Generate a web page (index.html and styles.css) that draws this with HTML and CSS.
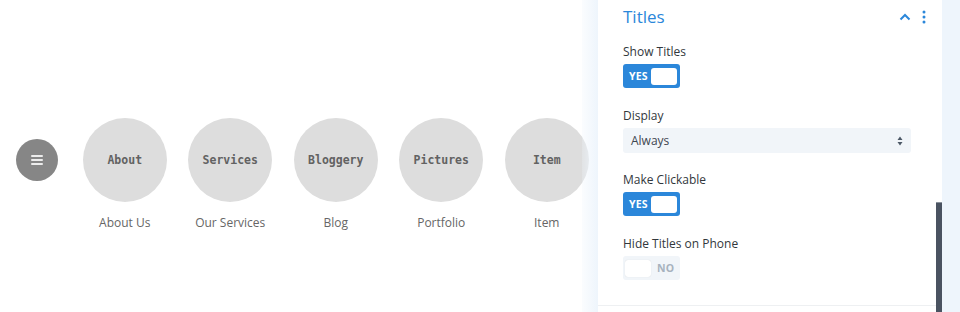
FILE: index.html
```html
<!DOCTYPE html>
<html>
<head>
<meta charset="utf-8">
<link rel="stylesheet" href="styles.css">
</head>
<body>
<div class="page">
  <div class="stage">
    <div class="menu-btn">
      <span class="bars"><i></i><i></i><i></i></span>
    </div>
    <div class="items">
      <div class="item"><div class="bubble">About</div><div class="caption">About Us</div></div>
      <div class="item"><div class="bubble">Services</div><div class="caption">Our Services</div></div>
      <div class="item"><div class="bubble">Bloggery</div><div class="caption">Blog</div></div>
      <div class="item"><div class="bubble">Pictures</div><div class="caption">Portfolio</div></div>
      <div class="item"><div class="bubble">Item</div><div class="caption">Item</div></div>
    </div>
  </div>
  <div class="side">
    <div class="panel">
      <div class="head">
        <span class="title">Titles</span>
        <span class="tools">
          <svg class="chev" width="12" height="8" viewBox="0 0 12 8"><path d="M1.5 6.5 L6 2 L10.5 6.5" fill="none" stroke="#2b87da" stroke-width="2"/></svg>
          <svg class="kebab" width="4" height="14" viewBox="0 0 4 14"><circle cx="2" cy="2" r="1.5" fill="#2b87da"/><circle cx="2" cy="7" r="1.5" fill="#2b87da"/><circle cx="2" cy="12" r="1.5" fill="#2b87da"/></svg>
        </span>
      </div>
      <div class="field">
        <div class="label">Show Titles</div>
        <div class="toggle on"><span class="txt">YES</span><span class="knob"></span></div>
      </div>
      <div class="field">
        <div class="label">Display</div>
        <div class="select"><span>Always</span>
          <svg width="6" height="10" viewBox="0 0 6 10"><path d="M3 0.5 L5.5 4 H0.5 Z M3 9.5 L0.5 6 H5.5 Z" fill="#4c5866"/></svg>
        </div>
      </div>
      <div class="field">
        <div class="label">Make Clickable</div>
        <div class="toggle on"><span class="txt">YES</span><span class="knob"></span></div>
      </div>
      <div class="field">
        <div class="label">Hide Titles on Phone</div>
        <div class="toggle off"><span class="knob"></span><span class="txt">NO</span></div>
      </div>
      <div class="divider"></div>
      <div class="scrollbar"></div>
    </div>
  </div>
</div>
</body>
</html>
```

FILE: styles.css
```css
* { box-sizing: border-box; }
html, body { margin: 0; padding: 0; background: #fff; }
body { width: 960px; height: 312px; overflow: hidden; font-family: "Open Sans", "Liberation Sans", sans-serif; }

.page { display: flex; height: 312px; }

.stage { width: 582px; flex-shrink: 0; display: flex; align-items: flex-start; padding-top: 118px; }

.menu-btn {
  width: 42px; height: 42px; border-radius: 50%;
  background: #868686;
  margin: 21px 0 0 16px;
  display: flex; align-items: center; justify-content: center;
  flex-shrink: 0;
}
.bars { display: flex; flex-direction: column; gap: 2px; width: 12px; }
.bars i { display: block; height: 2px; background: #ececec; border-radius: 1px; }

.items { display: flex; margin-left: 14px; }
.item { width: 105.5px; flex-shrink: 0; display: flex; flex-direction: column; align-items: center; }
.bubble {
  width: 84px; height: 84px; border-radius: 50%;
  background: #dddddd;
  display: flex; align-items: center; justify-content: center;
  font-family: "DejaVu Sans Mono", "Liberation Mono", monospace;
  font-weight: bold; font-size: 11.5px; color: #626262;
}
.caption { margin-top: 13px; font-size: 12px; line-height: 16px; color: #666; }

.side {
  flex: 1; display: flex;
  background: linear-gradient(90deg, rgba(238,245,252,0.25) 0, #eef5fc 16px);
  padding: 0 18px 0 16px;
}
.panel { position: relative; width: 344px; background: #fff; padding: 0 31px 0 25px; }

.head { height: 34px; display: flex; align-items: center; justify-content: space-between; }
.title { font-size: 17px; color: #2b87da; line-height: 20px; }
.tools { display: flex; align-items: center; gap: 11px; margin-right: -15px; }

.field { height: 64px; }
.head + .field { margin-top: 9px; }
.label { font-size: 12px; line-height: 18px; color: #32373c; font-weight: 500; margin-bottom: 3px; }

.toggle {
  width: 57px; height: 24px; border-radius: 3px;
  display: flex; align-items: center; padding: 0 3px;
}
.toggle.on { background: #2b87da; justify-content: space-between; padding-left: 6px; }
.toggle.off { background: #f1f5f9; padding-left: 2px; }
.toggle .knob { width: 26px; height: 17px; background: #fff; border-radius: 3px; }
.toggle .txt { font-size: 10.5px; font-weight: 700; letter-spacing: 0.2px; }
.toggle.on .txt { color: #fff; }
.toggle.off .txt { color: #a7b2be; margin-left: 6px; }
.toggle.off .knob { box-shadow: 0 0 1px rgba(0,0,0,0.15); }

.select {
  height: 25px; border-radius: 3px; background: #f1f5f9;
  display: flex; align-items: center; justify-content: space-between;
  padding: 0 8px;
  font-size: 12px; color: #3e4650;
}

.divider { position: absolute; left: 0; right: 0; top: 305px; height: 1px; background: #eef0f2; }
.scrollbar { position: absolute; right: 0; top: 202px; width: 6px; height: 110px; background: #4a5361; border-top: 1px solid #8a929c; }
```
